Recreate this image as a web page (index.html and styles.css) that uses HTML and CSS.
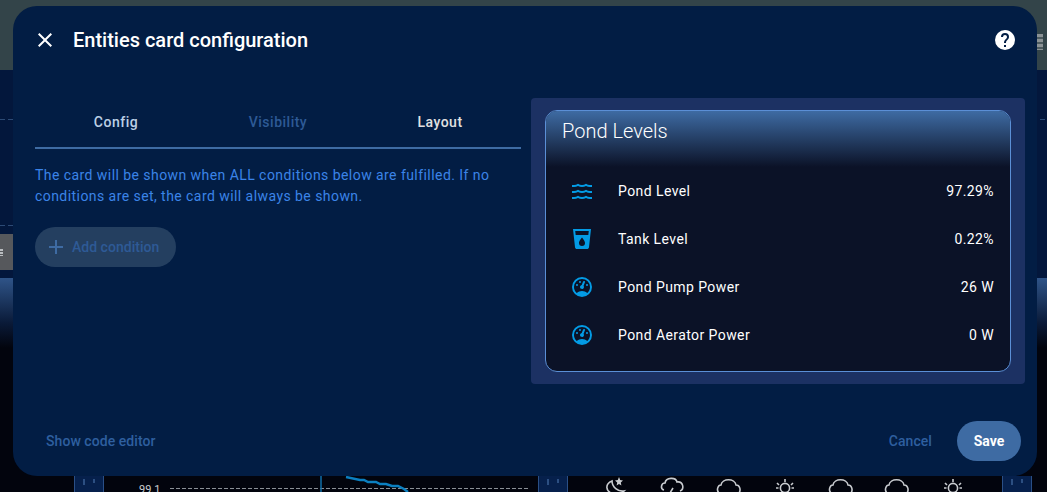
FILE: index.html
```html
<!DOCTYPE html>
<html lang="en">
<head>
<meta charset="utf-8">
<title>Entities card configuration</title>
<link rel="stylesheet" href="styles.css">
</head>
<body>
<div class="backdrop">
  <div class="bd-top">
    <span class="bd-corner"></span>
  </div>
  <div class="bd-navy">
    <div class="bd-dash bd-dash-a"></div>
    <div class="bd-dash bd-dash-b"></div>
    <div class="bd-dash bd-dash-c"></div>
    <div class="bd-chip"><span class="bd-chip-mark"></span></div>
  </div>
  <div class="bd-grad"></div>
  <svg class="bd-strip" width="1047" height="16" viewBox="0 0 1047 16">
    <rect x="74.5" y="-1" width="29" height="18" fill="#06204c" stroke="#2a4f86"/>
    <rect x="538.5" y="-1" width="29" height="18" fill="#06204c" stroke="#2a4f86"/>
    <rect x="1002.5" y="-1" width="29" height="18" fill="#06204c" stroke="#2a4f86"/>
    <path d="M84 3v6M94 3v4M548 3v6M558 3v4M1012 3v6M1022 3v4" stroke="#3a5f94" stroke-width="1.5" fill="none"/>
    <text x="139" y="17" class="bd-axis">99.1</text>
    <path d="M170 12.5H528" stroke="#8a8f96" stroke-dasharray="4 2" fill="none"/>
    <path d="M321 0V16" stroke="#0f6ea8" stroke-width="1.5" fill="none"/>
    <path d="M346 1l14 3h4l4 2h8l4 2h6l6 2h6l6 3 4 3" stroke="#0b7fc0" stroke-width="2.5" fill="none"/>
    <g fill="none" stroke="#c9ccd0" stroke-width="1.6">
      <path d="M612 5c-7 3-7 10 1 13 5 1 9-1 11-3-6 1-12-4-12-10z"/>
      <path d="M619 1l1.2 3 2.8.6-2.2 2 .6 3-2.4-1.6-2.4 1.6.6-3-2.2-2 2.8-.6z" fill="#c9ccd0" stroke="none"/>
      <path d="M664 14c-4-1-3-7 1-7 1-6 11-6 12-1 6-1 8 7 3 9"/>
      <path d="M673 12l-3 5"/>
      <path d="M719 17c-3-3-1-8 2-8 1-7 14-7 15 0 4 0 5 5 3 8"/>
      <path d="M831 17c-3-3-1-8 2-8 1-7 14-7 15 0 4 0 5 5 3 8"/>
      <path d="M887 17c-3-3-1-8 2-8 1-7 14-7 15 0 4 0 5 5 3 8"/>
      <circle cx="785" cy="12" r="4.6"/>
      <path d="M785 3v3M777 7l2 2M793 7l-2 2M776 12h2.5M794 12h-2.5"/>
      <circle cx="953" cy="12" r="4.6"/>
      <path d="M953 3v3M945 7l2 2M961 7l-2 2M944 12h2.5M962 12h-2.5"/>
    </g>
  </svg>
</div>

<div class="dialog">
  <header class="dlg-head">
    <svg class="ico ico-white" viewBox="0 0 24 24"><path d="M19,6.41L17.59,5L12,10.59L6.41,5L5,6.41L10.59,12L5,17.59L6.41,19L12,13.41L17.59,19L19,17.59L13.41,12L19,6.41Z"/></svg>
    <h1 class="dlg-title">Entities card configuration</h1>
    <svg class="ico ico-white" viewBox="0 0 24 24"><path d="M15.07,11.25L14.17,12.17C13.45,12.89 13,13.5 13,15H11V14.5C11,13.39 11.45,12.39 12.17,11.67L13.41,10.41C13.78,10.05 14,9.55 14,9C14,7.89 13.1,7 12,7A2,2 0 0,0 10,9H8A4,4 0 0,1 12,5A4,4 0 0,1 16,9C16,9.88 15.64,10.67 15.07,11.25M13,19H11V17H13M12,2A10,10 0 0,0 2,12A10,10 0 0,0 12,22A10,10 0 0,0 22,12C22,6.47 17.5,2 12,2Z"/></svg>
  </header>

  <main class="dlg-body">
    <section class="editor">
      <nav class="tabs">
        <span class="tab tab-config">Config</span>
        <span class="tab tab-vis">Visibility</span>
        <span class="tab tab-layout">Layout</span>
      </nav>
      <p class="desc">The card will be shown when ALL conditions below are fulfilled. If no conditions are set, the card will always be shown.</p>
      <button class="add-btn" type="button">
        <svg class="ico ico-add" viewBox="0 0 24 24"><path d="M19,13H13V19H11V13H5V11H11V5H13V11H19V13Z"/></svg>
        Add condition
      </button>
    </section>

    <section class="preview">
      <div class="card">
        <div class="card-head">Pond Levels</div>
        <div class="card-rows">
          <div class="row">
            <span class="badge"><svg class="ico ico-blue" viewBox="0 0 24 24"><path d="M20,12H22V14H20C18.62,14 17.26,13.65 16,13C13.5,14.3 10.5,14.3 8,13C6.74,13.65 5.37,14 4,14H2V12H4C5.39,12 6.78,11.53 8,10.67C10.44,12.38 13.56,12.38 16,10.67C17.22,11.53 18.61,12 20,12M20,6H22V8H20C18.62,8 17.26,7.65 16,7C13.5,8.3 10.5,8.3 8,7C6.74,7.65 5.37,8 4,8H2V6H4C5.39,6 6.78,5.53 8,4.67C10.44,6.38 13.56,6.38 16,4.67C17.22,5.53 18.61,6 20,6M20,18H22V20H20C18.62,20 17.26,19.65 16,19C13.5,20.3 10.5,20.3 8,19C6.74,19.65 5.37,20 4,20H2V18H4C5.39,18 6.78,17.53 8,16.67C10.44,18.38 13.56,18.38 16,16.67C17.22,17.53 18.61,18 20,18Z"/></svg></span>
            <span class="name">Pond Level</span><span class="val">97.29%</span>
          </div>
          <div class="row">
            <span class="badge"><svg class="ico ico-blue" viewBox="0 0 24 24"><path d="M18.32,8H5.67L5.23,4H18.77M12,19A3,3 0 0,1 9,16C9,14 12,10.6 12,10.6C12,10.6 15,14 15,16A3,3 0 0,1 12,19M3,2L5,20.23C5.13,21.23 5.97,22 7,22H17C18,22 18.87,21.23 19,20.23L21,2H3Z"/></svg></span>
            <span class="name">Tank Level</span><span class="val">0.22%</span>
          </div>
          <div class="row">
            <span class="badge"><svg class="ico ico-blue" viewBox="0 0 24 24"><path d="M12,2A10,10 0 0,0 2,12A10,10 0 0,0 12,22A10,10 0 0,0 22,12A10,10 0 0,0 12,2M12,4A8,8 0 0,1 20,12C20,14.4 19,16.5 17.3,18C15.9,16.7 14,16 12,16C10,16 8.2,16.7 6.7,18C5,16.5 4,14.4 4,12A8,8 0 0,1 12,4M14,5.89C13.62,5.9 13.26,6.15 13.1,6.54L11.81,9.77L11.71,10C11,10.13 10.41,10.6 10.14,11.26C9.73,12.29 10.23,13.45 11.26,13.86C12.29,14.27 13.45,13.77 13.86,12.74C14.12,12.08 14,11.32 13.57,10.76L13.67,10.5L14.96,7.29L14.97,7.26C15.17,6.75 14.92,6.17 14.41,5.96C14.28,5.91 14.15,5.89 14,5.89M10,6A1,1 0 0,0 9,7A1,1 0 0,0 10,8A1,1 0 0,0 11,7A1,1 0 0,0 10,6M7,9A1,1 0 0,0 6,10A1,1 0 0,0 7,11A1,1 0 0,0 8,10A1,1 0 0,0 7,9M17,9A1,1 0 0,0 16,10A1,1 0 0,0 17,11A1,1 0 0,0 18,10A1,1 0 0,0 17,9Z"/></svg></span>
            <span class="name">Pond Pump Power</span><span class="val">26 W</span>
          </div>
          <div class="row">
            <span class="badge"><svg class="ico ico-blue" viewBox="0 0 24 24"><path d="M12,2A10,10 0 0,0 2,12A10,10 0 0,0 12,22A10,10 0 0,0 22,12A10,10 0 0,0 12,2M12,4A8,8 0 0,1 20,12C20,14.4 19,16.5 17.3,18C15.9,16.7 14,16 12,16C10,16 8.2,16.7 6.7,18C5,16.5 4,14.4 4,12A8,8 0 0,1 12,4M14,5.89C13.62,5.9 13.26,6.15 13.1,6.54L11.81,9.77L11.71,10C11,10.13 10.41,10.6 10.14,11.26C9.73,12.29 10.23,13.45 11.26,13.86C12.29,14.27 13.45,13.77 13.86,12.74C14.12,12.08 14,11.32 13.57,10.76L13.67,10.5L14.96,7.29L14.97,7.26C15.17,6.75 14.92,6.17 14.41,5.96C14.28,5.91 14.15,5.89 14,5.89M10,6A1,1 0 0,0 9,7A1,1 0 0,0 10,8A1,1 0 0,0 11,7A1,1 0 0,0 10,6M7,9A1,1 0 0,0 6,10A1,1 0 0,0 7,11A1,1 0 0,0 8,10A1,1 0 0,0 7,9M17,9A1,1 0 0,0 16,10A1,1 0 0,0 17,11A1,1 0 0,0 18,10A1,1 0 0,0 17,9Z"/></svg></span>
            <span class="name">Pond Aerator Power</span><span class="val">0 W</span>
          </div>
        </div>
      </div>
    </section>
  </main>

  <footer class="dlg-foot">
    <span class="link link-code">Show code editor</span>
    <span class="link link-cancel">Cancel</span>
    <button class="save" type="button">Save</button>
  </footer>
</div>
</body>
</html>
```
FILE: styles.css
```css
* { box-sizing: border-box; }
html, body { margin: 0; padding: 0; height: 100%; }
body {
  width: 1047px;
  height: 492px;
  overflow: hidden;
  position: relative;
  font-family: Roboto, "Liberation Sans", sans-serif;
  background: #02040d;
}

/* Dimmed dashboard behind the dialog */
.backdrop { display: flex; flex-direction: column; height: 492px; }
.bd-top { height: 70px; flex: none; background: #334449; position: relative; }
.bd-corner {
  position: absolute;
  left: 1037px;
  top: 34px;
  width: 6px;
  height: 16px;
  background: repeating-linear-gradient(#8b9295 0 3px, #4c5a5e 3px 5px);
}
.bd-navy { height: 208px; flex: none; background: #03173c; position: relative; }
.bd-dash {
  position: absolute;
  height: 1px;
  background: repeating-linear-gradient(90deg, #2c4a75 0 5px, transparent 5px 8px);
}
.bd-dash-a { top: 49px; left: 0; width: 13px; }
.bd-dash-b { top: 155px; left: 0; width: 13px; }
.bd-dash-c { top: 49px; left: 1040px; width: 7px; }
.bd-chip { position: absolute; top: 164px; left: 0; width: 13px; height: 36px; background: #56585c; }
.bd-chip-mark {
  position: absolute;
  left: 0;
  top: 15px;
  width: 3px;
  height: 7px;
  background: repeating-linear-gradient(#b9bcbf 0 2px, transparent 2px 3px);
}
.bd-grad {
  height: 198px;
  flex: none;
  background: linear-gradient(#2f5488 0, #0a1a38 45px, #02040d 70px);
}
.bd-strip { display: block; flex: none; }
.bd-axis { font: 11px Roboto, sans-serif; fill: #c9ccd0; }

/* Dialog */
.dialog {
  position: absolute;
  left: 13px;
  top: 6px;
  width: 1024px;
  height: 470px;
  border-radius: 24px;
  background: #021d44;
  display: flex;
  flex-direction: column;
  color: #fff;
}
.dlg-head {
  height: 68px;
  flex: none;
  display: flex;
  align-items: center;
  padding: 0 20px;
  gap: 16px;
}
.dlg-title {
  flex: 1;
  margin: 0;
  font-size: 20px;
  font-weight: 500;
  line-height: 28px;
}
.ico { width: 24px; height: 24px; display: block; flex: none; }
.ico-white { fill: #fff; }
.ico-blue { fill: #039be5; }
.ico-add { fill: #3e6ba3; }

.dlg-body {
  flex: 1;
  display: flex;
  gap: 10px;
  padding: 24px 12px 0 22px;
  min-height: 0;
}
.editor { width: 486px; flex: none; }
.tabs {
  display: grid;
  grid-template-columns: repeat(3, 1fr);
  height: 51px;
  border-bottom: 2px solid #3e6ba3;
}
.tab {
  display: flex;
  align-items: center;
  justify-content: center;
  height: 48px;
  font-size: 14px;
  font-weight: 500;
  letter-spacing: 0.5px;
}
.tab-config { color: #bcd0e6; }
.tab-vis { color: #2e5a96; }
.tab-layout { color: #e1e1e1; }
.desc {
  margin: 16px 0 0;
  font-size: 14px;
  line-height: 21px;
  letter-spacing: 0.44px;
  color: #3b84e8;
}
.add-btn {
  margin-top: 20px;
  height: 40px;
  width: 141px;
  border: 0;
  border-radius: 20px;
  padding: 0 0 0 9px;
  display: flex;
  align-items: center;
  gap: 4px;
  background: #243f60;
  color: #2e5a96;
  font: 500 14px Roboto, sans-serif;
  letter-spacing: 0.02px;
}

.preview {
  width: 494px;
  height: 286px;
  flex: none;
  padding: 12px 14px;
  background: #1c3163;
  border-radius: 4px;
}
.card {
  height: 262px;
  border: 1px solid #5b8fd6;
  border-radius: 12px;
  background: #0b1227;
  overflow: hidden;
}
.card-head {
  height: 56px;
  padding: 0 16px;
  font-size: 20px;
  font-weight: 300;
  line-height: 40px;
  color: #fff;
  background: linear-gradient(#3e6ba3 0, #0b1227 100%);
}
.card-rows { padding: 0 16px; }
.row {
  height: 48px;
  display: flex;
  align-items: center;
  font-size: 14px;
  letter-spacing: 0.42px;
  color: #fff;
}
.badge {
  width: 40px;
  height: 40px;
  flex: none;
  display: flex;
  align-items: center;
  justify-content: center;
  margin-right: 16px;
}
.name { flex: 1; }
.val { letter-spacing: 0.4px; }

.dlg-foot {
  flex: none;
  height: 40px;
  margin-bottom: 15px;
  padding: 0 16px 0 33px;
  display: flex;
  align-items: center;
}
.link {
  font-size: 14px;
  font-weight: 500;
  letter-spacing: 0.06px;
  color: #2e5f9f;
}
.link-code { flex: 1; }
.link-cancel { margin-right: 25px; }
.save {
  width: 64px;
  height: 40px;
  border: 0;
  border-radius: 20px;
  background: #3e6ba3;
  color: #fff;
  font: 700 14px Roboto, sans-serif;
}
```
